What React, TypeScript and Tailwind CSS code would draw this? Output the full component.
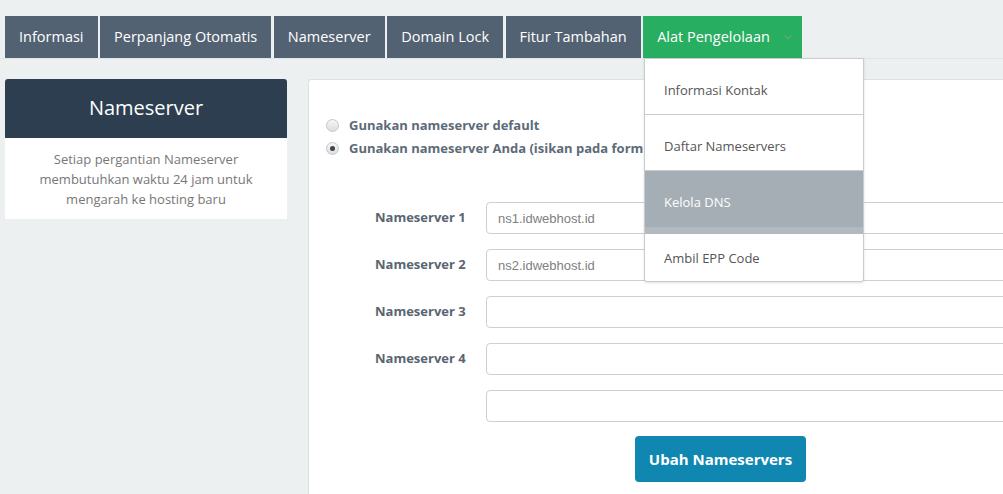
import { useState } from "react";

const tabs = [
  "Informasi",
  "Perpanjang Otomatis",
  "Nameserver",
  "Domain Lock",
  "Fitur Tambahan",
];

const menuItems = [
  "Informasi Kontak",
  "Daftar Nameservers",
  "Kelola DNS",
  "Ambil EPP Code",
];

const nameservers = [
  { label: "Nameserver 1", value: "ns1.idwebhost.id" },
  { label: "Nameserver 2", value: "ns2.idwebhost.id" },
  { label: "Nameserver 3", value: "" },
  { label: "Nameserver 4", value: "" },
  { label: "", value: "" },
];

function Radio({ checked }: { checked: boolean }) {
  return (
    <span className="
      flex
      h-[13px]
      w-[13px]
      shrink-0
      items-center
      justify-center
      rounded-full
      border
      border-[#c4c8cc]
      bg-gradient-to-b
      from-[#f4f5f6]
      to-[#dcdfe2]
    ">
      {checked && (
        <span className="h-[5px] w-[5px] rounded-full bg-[#444]" />
      )}
    </span>
  );
}

export default function App() {
  const [mode, setMode] = useState("custom");

  return (
    <div className="
      relative
      h-[494px]
      w-full
      overflow-hidden
      bg-[#ecf0f1]
      font-['Open_Sans',sans-serif]
    ">

      <div className="
        flex
        gap-[2.5px]
        border-b
        border-[#e0e4e7]
        pl-[5px]
        pt-4
      ">
        {tabs.map((tab) => (
          <div
            key={tab}
            className="
              flex
              h-[42px]
              items-center
              bg-[#536273]
              px-[14px]
              text-[14.5px]
              text-white
            "
          >
            {tab}
          </div>
        ))}

        <div className="
          flex
          h-[42px]
          items-center
          gap-[13px]
          bg-[#27ae60]
          pl-[14px]
          pr-[9px]
          text-[14.5px]
          text-white
        ">
          Alat Pengelolaan
          <svg width="10" height="10" viewBox="0 0 10 10" fill="none">
            <path d="M1.5 3.5 L5 6.5 L8.5 3.5" stroke="#5fa77c" strokeWidth="1.6" />
          </svg>
        </div>
      </div>


      <div className="mt-5 flex">

        <div className="ml-[5px] w-[282px] shrink-0">
          <div className="
            flex
            h-[59px]
            items-center
            justify-center
            rounded-t-[3px]
            bg-[#2c3e50]
            pb-[2px]
            text-[20px]
            text-white
          ">
            Nameserver
          </div>

          <p className="
            bg-white
            px-4
            pb-[10px]
            pt-[11px]
            text-center
            text-[13px]
            leading-5
            text-[#777]
          ">
            Setiap pergantian Nameserver membutuhkan waktu 24 jam untuk mengarah ke hosting baru
          </p>
        </div>


        <div className="
          ml-[21px]
          h-[420px]
          w-[900px]
          shrink-0
          rounded-tl-[3px]
          border-l
          border-t
          border-[#dde1e4]
          bg-white
          pl-[17px]
          pt-[34px]
        ">

          <div>
            <label
              className="flex h-[23px] items-center gap-[10px]"
              onClick={() => setMode("default")}
            >
              <Radio checked={mode === "default"} />
              <span className="text-[13px] font-bold text-[#5d6b78]">
                Gunakan nameserver default
              </span>
            </label>

            <label
              className="flex h-[23px] items-center gap-[10px]"
              onClick={() => setMode("custom")}
            >
              <Radio checked={mode === "custom"} />
              <span className="
                w-[295px]
                overflow-hidden
                whitespace-nowrap
                text-[13px]
                font-bold
                text-[#5d6b78]
              ">
                Gunakan nameserver Anda (isikan pada form di bawah ini)
              </span>
            </label>
          </div>


          <div className="mt-[42px] space-y-[15px] pl-[49px]">
            {nameservers.map((ns, i) => (
              <div key={i} className="flex items-center">
                <span className="
                  w-[111px]
                  shrink-0
                  text-[13px]
                  font-bold
                  text-[#5a6570]
                ">
                  {ns.label}
                </span>

                <input
                  defaultValue={ns.value}
                  className="
                    h-[32px]
                    w-[600px]
                    rounded-[4px]
                    border
                    border-[#c9d1d8]
                    px-[11px]
                    font-['Liberation_Sans',sans-serif]
                    text-[13px]
                    text-[#808080]
                    outline-none
                  "
                />
              </div>
            ))}
          </div>


          <button className="
            ml-[309px]
            mt-[14px]
            h-[46px]
            w-[171px]
            rounded-[4px]
            bg-[#1087b1]
            text-[15px]
            font-bold
            text-white
          ">
            Ubah Nameservers
          </button>

        </div>

      </div>


      <div className="
        absolute
        left-[644px]
        top-[58px]
        w-[220px]
        overflow-hidden
        rounded-b-[3px]
        border
        border-[#c8ccd0]
        bg-white
        shadow-sm
      ">
        {menuItems.map((item, i) => (
          <div
            key={item}
            className={
              item === "Kelola DNS"
                ? "flex h-[63px] items-center border-b-[7px] border-[#b2b9bf] bg-[#a5aeb5] pl-[19px] pt-[7px] text-[13px] text-white"
                : i === menuItems.length - 1
                  ? "flex h-[47px] items-center pl-[19px] pt-[2px] text-[13px] text-[#555]"
                  : "flex h-[56px] items-center border-b border-[#c8ccd0] pl-[19px] pt-[8px] text-[13px] text-[#555]"
            }
          >
            {item}
          </div>
        ))}
      </div>

    </div>
  );
}
